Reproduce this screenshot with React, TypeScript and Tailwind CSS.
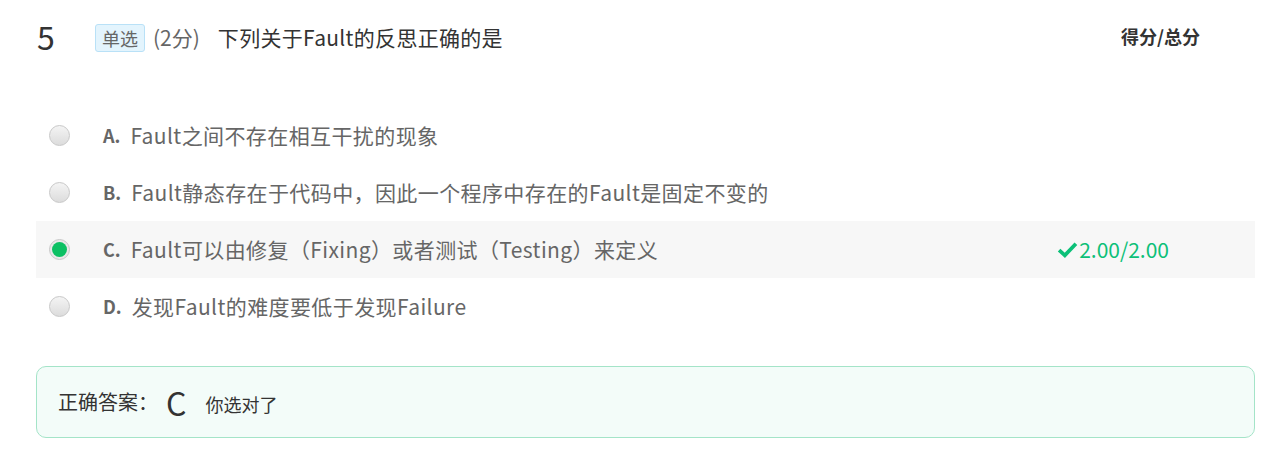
import React from "react";

const font = { fontFamily: '"Noto Sans CJK SC", "Noto Sans", sans-serif' };

interface OptionProps {
  letter: string;
  text: string;
  checked?: boolean;
  score?: string;
}

const Option: React.FC<OptionProps> = ({ letter, text, checked, score }) => {
  return (
    <div
      className={`flex items-center h-[57px] pl-[13px] pr-[86px] ${
        checked ? "bg-[#f7f7f7]" : ""
      }`}
    >
      <span
        className={`w-[21px] h-[21px] rounded-full border border-[#c8c8c8] flex items-center justify-center shrink-0 ${
          checked ? "bg-[#e8e8e8]" : "bg-gradient-to-b from-[#f4f4f4] to-[#dcdcdc]"
        }`}
      >
        {checked && <span className="w-[15px] h-[15px] rounded-full bg-[#0cc063]" />}
      </span>
      <span className="ml-[33px] text-[18px] font-bold text-[#666]">{letter}.</span>
      <span className="ml-[10px] text-[21px] text-[#666] tracking-[0.4px]">{text}</span>
      {score && (
        <span className="ml-auto flex items-center text-[21px] text-[#0cc078]">
          <svg width="21" height="17" viewBox="0 0 20 16" className="mr-[1px]">
            <path d="M2 8.5 L7.5 13.5 L18 2.5" fill="none" stroke="#0cc078" strokeWidth="3.6" />
          </svg>
          {score}
        </span>
      )}
    </div>
  );
};

export default function App() {
  return (
    <div className="w-[1275px] h-[467px] bg-white pl-[36px] pr-[20px] pt-[16px]" style={font}>
      <div className="flex items-start">
        <span className="text-[32px] leading-[40px] text-[#333] w-[59px] pl-[1px]">5</span>
        <div className="flex items-center mt-[6px]">
          <span className="px-[6px] h-[28px] leading-[26px] text-[18px] text-[#666] bg-[#e3f4fd] border border-[#b9e1f7] rounded-[3px]">
            单选
          </span>
          <span className="ml-[8px] text-[21px] text-[#666]">(2分)</span>
          <span className="ml-[18px] text-[21px] text-[#333] tracking-[0.3px]">下列关于Fault的反思正确的是</span>
        </div>
        <span className="ml-auto mr-[55px] mt-[7px] text-[18px] font-bold text-[#333]">得分/总分</span>
      </div>

      <div className="mt-[51px]">
        <Option letter="A" text="Fault之间不存在相互干扰的现象" />
        <Option letter="B" text="Fault静态存在于代码中，因此一个程序中存在的Fault是固定不变的" />
        <Option letter="C" text="Fault可以由修复（Fixing）或者测试（Testing）来定义" checked score="2.00/2.00" />
        <Option letter="D" text="发现Fault的难度要低于发现Failure" />
      </div>

      <div className="mt-[31px] h-[72px] border border-[#a4e4c8] bg-[#f3fcf9] rounded-[10px] flex items-center pl-[21px]">
        <span className="text-[20px] text-[#333]">正确答案：</span>
        <span className="ml-[8px] text-[32px] text-[#333] leading-none">C</span>
        <span className="ml-[19px] text-[18px] text-[#333] mt-[4px]">你选对了</span>
      </div>
    </div>
  );
}
